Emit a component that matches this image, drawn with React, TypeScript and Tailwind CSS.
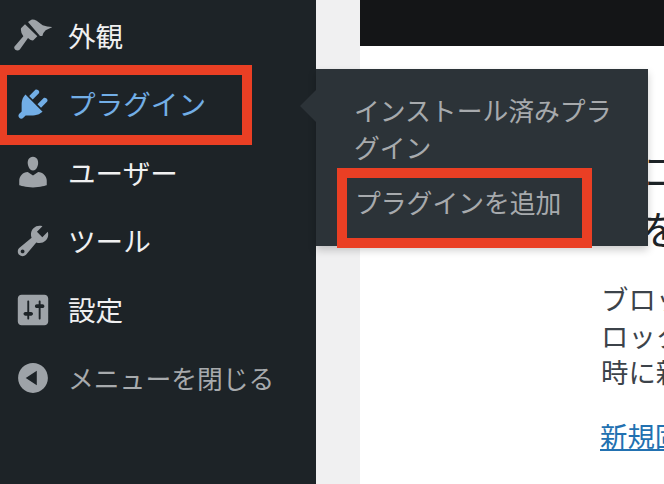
const font = { fontFamily: '"Noto Sans CJK JP", "Noto Sans", sans-serif' };

const icons: Record<string, string> = {
  plugins:
    "M13.11 4.36L9.87 7.6 8 5.73l3.24-3.24c.35-.34 1.05-.2 1.56.32.52.51.66 1.21.31 1.55zm-8 1.77l.91-1.12 9.01 9.01-1.19.84c-.71.71-2.63 1.16-3.82 1.16H6.14L4.9 17.26c-.59.59-1.54.59-2.12 0-.59-.58-.59-1.53 0-2.12l1.24-1.24v-3.88c0-1.13.4-3.19 1.09-3.89zm7.26 3.97l3.24-3.24c.34-.35 1.04-.21 1.55.31.52.51.66 1.21.31 1.55l-3.24 3.25z",
  users:
    "M10 9.25c-2.27 0-2.73-3.44-2.73-3.44C7 4.02 7.82 2 9.97 2c2.16 0 2.98 2.02 2.71 3.81 0 0-.41 3.44-2.68 3.44zm0 2.57L12.72 10c2.39 0 4.52 2.33 4.52 4.53v2.49s-3.65 1.13-7.24 1.13c-3.65 0-7.24-1.13-7.24-1.13v-2.49c0-2.25 1.94-4.48 4.47-4.48z",
  tools:
    "M16.68 9.77c-1.34 1.34-3.3 1.67-4.95.99l-5.41 6.52c-.99.99-2.59.99-3.58 0s-.99-2.59 0-3.57l6.52-5.42c-.68-1.65-.35-3.61.99-4.95 1.28-1.28 3.12-1.62 4.72-1.06l-2.89 2.89 2.82 2.82 2.86-2.87c.53 1.58.18 3.39-1.08 4.65zM3.81 16.21c.4.39 1.04.39 1.43 0 .4-.4.4-1.04 0-1.43-.39-.4-1.03-.4-1.43 0-.39.39-.39 1.03 0 1.43z",
  settings:
    "M18 16V4c0-1.1-.9-2-2-2H4c-1.1 0-2 .9-2 2v12c0 1.1.9 2 2 2h12c1.1 0 2-.9 2-2zM8 11h1c.55 0 1 .45 1 1s-.45 1-1 1H8v1.5c0 .28-.22.5-.5.5s-.5-.22-.5-.5V13H6c-.55 0-1-.45-1-1s.45-1 1-1h1V5.5c0-.28.22-.5.5-.5s.5.22.5.5V11zm5-2h-1c-.55 0-1-.45-1-1s.45-1 1-1h1V5.5c0-.28.22-.5.5-.5s.5.22.5.5V7h1c.55 0 1 .45 1 1s-.45 1-1 1h-1v5.5c0 .28-.22.5-.5.5s-.5-.22-.5-.5V9z",
  collapse:
    "M10 2.16c4.33 0 7.84 3.51 7.84 7.84s-3.51 7.84-7.84 7.84S2.16 14.33 2.16 10 5.71 2.16 10 2.16zm2 11.72V6.12L6.18 9.97z",
};

function Icon({ name, className }: { name: string; className: string }) {
  if (name === "appearance") {
    return (
      <svg viewBox="18 9 114 114" className={className} fill="currentColor" aria-hidden="true">
        <path d="M60 27 L70 20 Q78 19 86 23 L104 37 Q118 42 133 42 L113 52 Q106 58 103 69 L96 69 Z" />
        <path d="M39 46 L51 34 L88 70 L76 82 Q68 84 60 75 L36 109 C30 117 16 110 19 101 L46 70 Q37 58 39 46 Z" />
      </svg>
    );
  }
  return (
    <svg viewBox="0 0 20 20" className={className} fill="currentColor" aria-hidden="true">
      <path d={icons[name]} />
    </svg>
  );
}

function Row({ icon, label, active, muted }: { icon: string; label: string; active?: boolean; muted?: boolean }) {
  const color = active ? "text-[#72aee6]" : muted ? "text-[#a7aaad]" : "text-[#f0f0f1]";
  const iconColor = active ? "text-[#72aee6]" : "text-[#9ea3a8]";
  const size = muted ? "text-[25.8px]" : "text-[27.6px]";
  return (
    <div className={`flex h-[68.6px] items-center ${color}`}>
      <div className="flex w-[68px] justify-center">
        <Icon name={icon} className={`ml-[-2px] h-[38px] w-[38px] ${iconColor}`} />
      </div>
      <span className={`${size} leading-none`}>{label}</span>
    </div>
  );
}

export default function App() {
  return (
    <div className="relative flex h-[484px] w-[664px] overflow-hidden bg-[#f0f0f1]" style={font}>
      <aside className="flex h-full w-[316px] shrink-0 flex-col bg-[#1d2327] pt-[1px]">
        <Row icon="appearance" label="外観" />
        <Row icon="plugins" label="プラグイン" active />
        <Row icon="users" label="ユーザー" />
        <Row icon="tools" label="ツール" />
        <Row icon="settings" label="設定" />
        <Row icon="collapse" label="メニューを閉じる" muted />
      </aside>

      <main className="ml-[44px] flex min-w-0 flex-1 flex-col bg-white">
        <div className="h-[46px] shrink-0 bg-[#141517]" />
        <div className="whitespace-nowrap pl-[282px] pt-[94px] text-[39px] leading-[58px] text-[#1d2327]">
          <div>コ</div>
          <div>を</div>
        </div>
        <div className="whitespace-nowrap pl-[241px] pt-[24px] text-[27.4px] leading-[36.5px] text-[#3c434a]">
          <div>ブロッ</div>
          <div>ロック</div>
          <div>時に新</div>
        </div>
        <div className="whitespace-nowrap pl-[240px] pt-[27px] text-[27.4px] leading-[37px] text-[#2271b1] underline">
          新規固定
        </div>
      </main>

      {/* flyout submenu */}
      <div className="absolute left-[316px] top-[69px] h-[177px] w-[332px] bg-[#2c3338] pl-[38px] pr-[20px] pt-[23px] text-[25.8px] leading-[36.5px] text-[#a7aaad] shadow-[0_4px_8px_rgba(0,0,0,0.2)]">
        <div>インストール済みプラグイン</div>
        <div className="mt-[19px] pl-[1px]">プラグインを追加</div>
      </div>
      <div className="absolute left-[300px] top-[90px] h-[32px] w-[16px] bg-[#2c3338] [clip-path:polygon(100%_0,100%_100%,0_50%)]" />

      {/* annotation boxes */}
      <div className="absolute left-0 top-[65px] h-[80px] w-[252px] border-[10px] border-l-[7px] border-[#ea3f24]" />
      <div className="absolute left-[337px] top-[168px] h-[80px] w-[255px] border-[10px] border-[#ea3f24]" />
    </div>
  );
}
